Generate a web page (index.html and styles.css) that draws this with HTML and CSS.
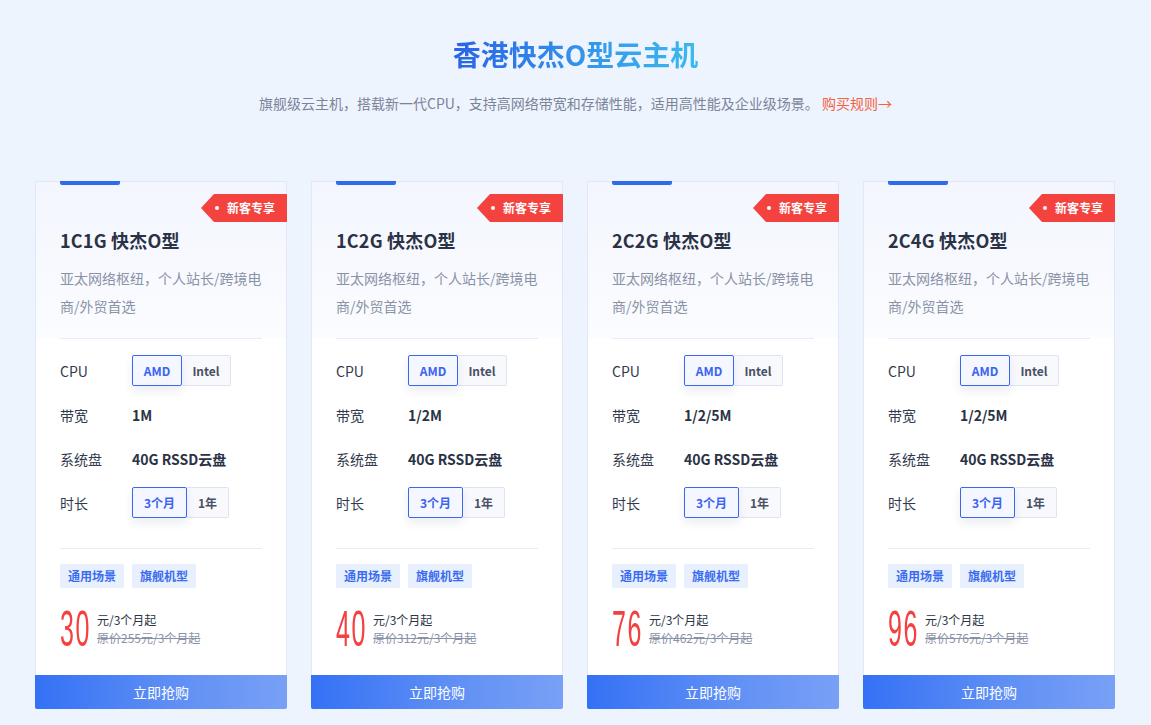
FILE: index.html
```html
<!DOCTYPE html>
<html lang="zh-CN">
<head>
<meta charset="utf-8">
<title>香港快杰O型云主机</title>
<link rel="stylesheet" href="styles.css">
</head>
<body>
<header class="hero">
  <h1 class="hero-title">香港快杰O型云主机</h1>
  <p class="hero-sub">旗舰级云主机，搭载新一代CPU，支持高网络带宽和存储性能，适用高性能及企业级场景。 <a class="rule-link" href="#">购买规则→</a></p>
</header>
<main class="cards">
  <section class="card">
    <div class="card-head">
      <div class="bar"></div>
      <span class="badge"><i class="dot"></i>新客专享</span>
      <h2 class="card-title">1C1G 快杰O型</h2>
      <p class="card-desc">亚太网络枢纽，个人站长/跨境电商/外贸首选</p>
    </div>
    <div class="card-body">
      <div class="specs">
        <div class="row"><span class="label">CPU</span><div class="toggle"><span class="opt active">AMD</span><span class="opt">Intel</span></div></div>
        <div class="row"><span class="label">带宽</span><span class="value">1M</span></div>
        <div class="row"><span class="label">系统盘</span><span class="value">40G RSSD云盘</span></div>
        <div class="row"><span class="label">时长</span><div class="toggle"><span class="opt active wide">3个月</span><span class="opt narrow">1年</span></div></div>
      </div>
      <div class="tags"><span class="tag">通用场景</span><span class="tag">旗舰机型</span></div>
      <div class="price">
        <span class="num-wrap"><span class="num">30</span></span>
        <div class="price-text"><span class="unit">元/3个月起</span><span class="orig">原价255元/3个月起</span></div>
      </div>
    </div>
    <a class="buy" href="#">立即抢购</a>
  </section>

  <section class="card">
    <div class="card-head">
      <div class="bar"></div>
      <span class="badge"><i class="dot"></i>新客专享</span>
      <h2 class="card-title">1C2G 快杰O型</h2>
      <p class="card-desc">亚太网络枢纽，个人站长/跨境电商/外贸首选</p>
    </div>
    <div class="card-body">
      <div class="specs">
        <div class="row"><span class="label">CPU</span><div class="toggle"><span class="opt active">AMD</span><span class="opt">Intel</span></div></div>
        <div class="row"><span class="label">带宽</span><span class="value">1/2M</span></div>
        <div class="row"><span class="label">系统盘</span><span class="value">40G RSSD云盘</span></div>
        <div class="row"><span class="label">时长</span><div class="toggle"><span class="opt active wide">3个月</span><span class="opt narrow">1年</span></div></div>
      </div>
      <div class="tags"><span class="tag">通用场景</span><span class="tag">旗舰机型</span></div>
      <div class="price">
        <span class="num-wrap"><span class="num">40</span></span>
        <div class="price-text"><span class="unit">元/3个月起</span><span class="orig">原价312元/3个月起</span></div>
      </div>
    </div>
    <a class="buy" href="#">立即抢购</a>
  </section>

  <section class="card">
    <div class="card-head">
      <div class="bar"></div>
      <span class="badge"><i class="dot"></i>新客专享</span>
      <h2 class="card-title">2C2G 快杰O型</h2>
      <p class="card-desc">亚太网络枢纽，个人站长/跨境电商/外贸首选</p>
    </div>
    <div class="card-body">
      <div class="specs">
        <div class="row"><span class="label">CPU</span><div class="toggle"><span class="opt active">AMD</span><span class="opt">Intel</span></div></div>
        <div class="row"><span class="label">带宽</span><span class="value">1/2/5M</span></div>
        <div class="row"><span class="label">系统盘</span><span class="value">40G RSSD云盘</span></div>
        <div class="row"><span class="label">时长</span><div class="toggle"><span class="opt active wide">3个月</span><span class="opt narrow">1年</span></div></div>
      </div>
      <div class="tags"><span class="tag">通用场景</span><span class="tag">旗舰机型</span></div>
      <div class="price">
        <span class="num-wrap"><span class="num">76</span></span>
        <div class="price-text"><span class="unit">元/3个月起</span><span class="orig">原价462元/3个月起</span></div>
      </div>
    </div>
    <a class="buy" href="#">立即抢购</a>
  </section>

  <section class="card">
    <div class="card-head">
      <div class="bar"></div>
      <span class="badge"><i class="dot"></i>新客专享</span>
      <h2 class="card-title">2C4G 快杰O型</h2>
      <p class="card-desc">亚太网络枢纽，个人站长/跨境电商/外贸首选</p>
    </div>
    <div class="card-body">
      <div class="specs">
        <div class="row"><span class="label">CPU</span><div class="toggle"><span class="opt active">AMD</span><span class="opt">Intel</span></div></div>
        <div class="row"><span class="label">带宽</span><span class="value">1/2/5M</span></div>
        <div class="row"><span class="label">系统盘</span><span class="value">40G RSSD云盘</span></div>
        <div class="row"><span class="label">时长</span><div class="toggle"><span class="opt active wide">3个月</span><span class="opt narrow">1年</span></div></div>
      </div>
      <div class="tags"><span class="tag">通用场景</span><span class="tag">旗舰机型</span></div>
      <div class="price">
        <span class="num-wrap"><span class="num">96</span></span>
        <div class="price-text"><span class="unit">元/3个月起</span><span class="orig">原价576元/3个月起</span></div>
      </div>
    </div>
    <a class="buy" href="#">立即抢购</a>
  </section>
</main>
</body>
</html>
```
FILE: styles.css
```css
* { box-sizing: border-box; }
html, body { margin: 0; padding: 0; }
body {
  background: #eef4fe;
  font-family: "Noto Sans CJK SC", "Noto Sans", sans-serif;
  color: #2b3245;
  width: 1151px;
  height: 725px;
  overflow: hidden;
}
.hero { text-align: center; padding-top: 34px; }
.hero-title {
  margin: 0;
  font-size: 28px;
  line-height: 40px;
  font-weight: 700;
  display: inline-block;
  background: linear-gradient(90deg, #2a63e6 0%, #3496ea 55%, #3cbaee 100%);
  -webkit-background-clip: text;
  background-clip: text;
  color: transparent;
}
.hero-sub {
  margin: 19px 0 0;
  font-size: 14px;
  line-height: 20px;
  color: #7b8499;
}
.rule-link { color: #f5603f; text-decoration: none; }

.cards {
  display: flex;
  justify-content: center;
  gap: 24px;
  margin-top: 68px;
  padding-right: 1px;
}
.card {
  width: 252px;
  background: #fff;
  border: 1px solid #e2e8f5;
  position: relative;
  display: flex;
  flex-direction: column;
}
.card-head {
  background: linear-gradient(180deg, #f3f6fe 0%, #fbfcff 100%);
  padding: 0 24px 18px;
  position: relative;
}
.bar {
  width: 60px;
  height: 4px;
  background: #2f6ceb;
  border-radius: 0 0 2px 2px;
  margin-top: -1px;
}
.badge {
  position: absolute;
  top: 12px;
  right: -1px;
  width: 86px;
  height: 28px;
  background: #f4423f;
  clip-path: polygon(0 50%, 13px 0, 100% 0, 100% 100%, 13px 100%);
  color: #fff;
  font-size: 12px;
  font-weight: 700;
  line-height: 28px;
  padding-left: 26px;
}
.dot {
  position: absolute;
  left: 14px;
  top: 12px;
  width: 4px;
  height: 4px;
  border-radius: 50%;
  background: #fff;
}
.card-title {
  margin: 42px 0 0;
  font-size: 18px;
  line-height: 26px;
  font-weight: 700;
  color: #2b3245;
  letter-spacing: 0.2px;
}
.card-desc {
  margin: 11px 0 0;
  font-size: 14px;
  line-height: 28px;
  color: #8a92a6;
}
.card-body { padding: 0 24px; }
.specs {
  border-top: 1px solid #e8ecf6;
  border-bottom: 1px solid #e8ecf6;
  padding: 16px 0 30px;
  display: flex;
  flex-direction: column;
  gap: 13px;
}
.row {
  display: flex;
  align-items: center;
  height: 31px;
}
.label {
  width: 72px;
  font-size: 14px;
  color: #333a4d;
}
.value {
  font-size: 14px;
  font-weight: 700;
  color: #2b3245;
}
.toggle { display: flex; }
.opt {
  height: 31px;
  width: 50px;
  display: flex;
  align-items: center;
  justify-content: center;
  font-size: 12px;
  font-weight: 700;
  color: #4a5063;
  background: #f8f9fd;
  border: 1px solid #dfe3ef;
}
.opt + .opt { border-left: none; width: 49px; border-radius: 0 2px 2px 0; }
.opt.active {
  color: #3b63f0;
  background: #f4f7ff;
  border-color: #3b66f2;
  border-radius: 2px;
  box-shadow: 0 5px 10px rgba(30, 50, 100, 0.09);
  position: relative;
}
.opt.wide { width: 55px; }
.opt.narrow { width: 42px; }

.tags {
  display: flex;
  gap: 8px;
  margin-top: 15px;
}
.tag {
  height: 24px;
  line-height: 24px;
  padding: 0 8px;
  font-size: 12px;
  font-weight: 700;
  color: #3a6cf0;
  background: #e9f0fd;
  border-radius: 2px;
}
.price {
  display: flex;
  align-items: center;
  height: 46px;
  margin-top: 18px;
  margin-bottom: 23px;
}
.num-wrap {
  width: 37px;
  height: 46px;
  display: block;
  position: relative;
}
.num {
  display: block;
  font-family: "Liberation Sans", "DejaVu Sans", sans-serif;
  font-size: 50px;
  line-height: 46px;
  color: #f4403f;
  transform: scaleX(0.5);
  transform-origin: left center;
  white-space: nowrap;
  letter-spacing: 3px;
}
.price-text {
  display: flex;
  flex-direction: column;
  font-size: 12px;
  line-height: 18px;
}
.unit { color: #2b3245; }
.orig { color: #8a92a6; text-decoration: line-through; }
.buy {
  display: block;
  height: 34px;
  line-height: 34px;
  text-align: center;
  color: #fff;
  font-size: 14px;
  text-decoration: none;
  background: linear-gradient(90deg, #3471f5 0%, #5f8ff5 55%, #78a0f6 100%);
  border-radius: 0 0 2px 2px;
  margin: 0 -1px -1px;
}
```
